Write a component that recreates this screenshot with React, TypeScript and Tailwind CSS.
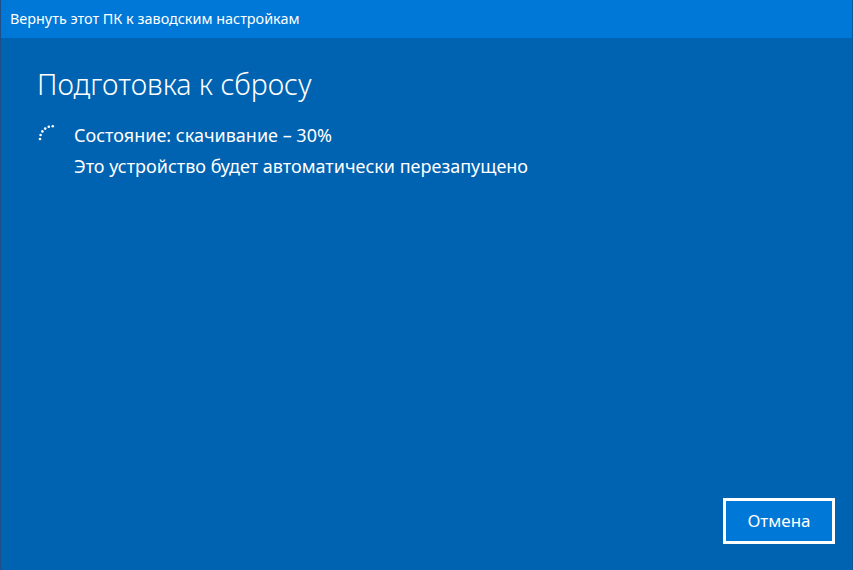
import React from "react";

function Spinner() {
  const dots = [
    [38, 137],
    [38.6, 133],
    [40.4, 129.4],
    [43.2, 126.6],
    [46.8, 124.8],
    [50.8, 124.2],
  ];
  return (
    <svg width="20" height="20" viewBox="34 121 20 20" className="shrink-0">
      {dots.map(([x, y], i) => (
        <circle key={i} cx={x} cy={y} r="1.3" fill="#ffffff" />
      ))}
    </svg>
  );
}

export default function App() {
  return (
    <div
      className="w-[853px] h-[570px] flex flex-col bg-[#0063b1] text-white overflow-hidden border-l border-r border-[#1f4f86]"
      style={{ fontFamily: '"Noto Sans", "Open Sans", sans-serif' }}
    >
      <div className="h-[38px] shrink-0 bg-[#0078d7] flex items-center pl-[9px] text-[14.4px]">
        Вернуть этот ПК к заводским настройкам
      </div>
      <div className="flex-1 flex flex-col pl-[36px] pr-[17px] pb-[26px]">
        <h1 className="mt-[28px] text-[28.5px] leading-[36px] font-light">
          Подготовка к сбросу
        </h1>
        <div className="mt-[18px] flex">
          <div className="w-[38px] pt-[3px] -ml-[1px]">
            <Spinner />
          </div>
          <div className="flex flex-col text-[18px] leading-[31px]">
            <span>Состояние: скачивание – 30%</span>
            <span>Это устройство будет автоматически перезапущено</span>
          </div>
        </div>
        <div className="flex-1" />
        <div className="flex justify-end">
          <button className="w-[112px] h-[46px] border-[3px] border-white bg-[#0078d7] text-white text-[17px] flex items-center justify-center">
            Отмена
          </button>
        </div>
      </div>
    </div>
  );
}
